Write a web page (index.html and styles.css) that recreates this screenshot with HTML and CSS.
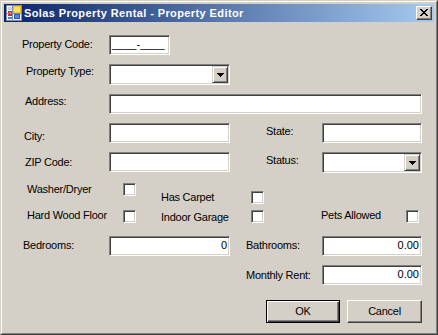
FILE: index.html
```html
<!DOCTYPE html>
<html>
<head>
<meta charset="utf-8">
<title>Solas Property Rental - Property Editor</title>
<link rel="stylesheet" href="styles.css">
</head>
<body>
<div class="window">
  <div class="frame">
    <div class="titlebar">
      <svg class="app-icon" width="16" height="16" viewBox="0 0 16 16" shape-rendering="crispEdges">
        <rect x="0" y="0" width="16" height="16" fill="#7f8fa8"/>
        <rect x="1" y="1" width="14" height="14" fill="#ffffff"/>
        <rect x="2" y="2" width="4" height="3" fill="#c8d0e0"/>
        <rect x="2" y="6" width="4" height="5" fill="#d82818"/>
        <rect x="3" y="7" width="2" height="2" fill="#f08070"/>
        <rect x="2" y="12" width="4" height="2" fill="#5080d8"/>
        <rect x="7" y="1" width="8" height="7" fill="#f0c020"/>
        <rect x="8" y="2" width="6" height="5" fill="#f8e060"/>
        <rect x="8" y="9" width="6" height="5" fill="#2858c8"/>
        <rect x="9" y="10" width="4" height="3" fill="#5888e8"/>
        <rect x="6" y="1" width="1" height="14" fill="#7f8fa8"/>
        <rect x="1" y="8" width="14" height="1" fill="#7f8fa8"/>
      </svg>
      <span class="title">Solas Property Rental - Property Editor</span>
      <div class="cap-btn">
        <svg width="8" height="7" viewBox="0 0 8 7" shape-rendering="crispEdges">
          <path d="M0 0h2v1H0zM6 0h2v1H6zM1 1h2v1H1zM5 1h2v1H5zM2 2h4v1H2zM3 3h2v1H3zM2 4h4v1H2zM1 5h2v1H1zM5 5h2v1H5zM0 6h2v1H0zM6 6h2v1H6z" fill="#000"/>
        </svg>
      </div>
    </div>

    <div class="client">
      <div class="row first">
        <label class="lbl col-a l-code">Property Code:</label>
        <div class="tb mask w-code">____-____</div>
      </div>
      <div class="row">
        <label class="lbl col-a l-type">Property Type:</label>
        <div class="combo w-left"><span class="drop"><svg width="7" height="4" viewBox="0 0 7 4" shape-rendering="crispEdges"><path d="M0 0h7v1H0zM1 1h5v1H1zM2 2h3v1H2zM3 3h1v1H3z" fill="#000"/></svg></span></div>
      </div>
      <div class="row">
        <label class="lbl col-a l-address">Address:</label>
        <div class="tb w-full"></div>
      </div>
      <div class="row">
        <label class="lbl col-a l-city">City:</label>
        <div class="tb w-left"></div>
        <label class="lbl col-b l-state">State:</label>
        <div class="tb w-right"></div>
      </div>
      <div class="row">
        <label class="lbl col-a l-zip">ZIP Code:</label>
        <div class="tb w-left"></div>
        <label class="lbl col-b l-status">Status:</label>
        <div class="combo w-right"><span class="drop"><svg width="7" height="4" viewBox="0 0 7 4" shape-rendering="crispEdges"><path d="M0 0h7v1H0zM1 1h5v1H1zM2 2h3v1H2zM3 3h1v1H3z" fill="#000"/></svg></span></div>
      </div>

      <div class="checks">
        <div class="chk-col col-1">
          <div class="chk">
            <span class="lbl cl-1">Washer/Dryer</span>
            <span class="cb"></span>
          </div>
          <div class="chk second">
            <span class="lbl cl-1 up">Hard Wood Floor</span>
            <span class="cb"></span>
          </div>
        </div>
        <div class="chk-col col-2">
          <div class="chk">
            <span class="lbl cl-2">Has Carpet</span>
            <span class="cb"></span>
          </div>
          <div class="chk near">
            <span class="lbl cl-2 down">Indoor Garage</span>
            <span class="cb"></span>
          </div>
        </div>
        <div class="chk-col col-3">
          <div class="chk">
            <span class="lbl cl-3 up">Pets Allowed</span>
            <span class="cb"></span>
          </div>
        </div>
      </div>

      <div class="row after-checks">
        <label class="lbl col-a l-bed">Bedrooms:</label>
        <div class="tb num w-left">0</div>
        <label class="lbl col-b l-bath">Bathrooms:</label>
        <div class="tb num w-right">0.00</div>
      </div>
      <div class="row">
        <label class="lbl col-b skip l-rent">Monthly Rent:</label>
        <div class="tb num w-right">0.00</div>
      </div>

      <div class="buttons">
        <button class="btn default">OK</button>
        <button class="btn cancel">Cancel</button>
      </div>
    </div>
  </div>
</div>
</body>
</html>
```

FILE: styles.css
```css
* { box-sizing: border-box; }

html, body {
  margin: 0;
  padding: 0;
  background: #d4d0c8;
}

body {
  font-family: "Liberation Sans", Arial, sans-serif;
  font-size: 11px;
  line-height: 13px;
  color: #000;
}

.window {
  width: 438px;
  height: 335px;
  border: 1px solid;
  border-color: #d4d0c8 #404040 #404040 #d4d0c8;
  background: #d4d0c8;
}

.frame {
  height: 100%;
  border: 1px solid;
  border-color: #fff #808080 #808080 #fff;
  padding: 2px;
  display: flex;
  flex-direction: column;
}

.titlebar {
  height: 18px;
  flex: none;
  display: flex;
  align-items: center;
  padding: 0 2px;
  background: linear-gradient(to right, #0a246a, #a6caf0);
}

.app-icon {
  flex: none;
  display: block;
}

.title {
  flex: 1;
  margin-left: 2px;
  color: #fff;
  font-weight: bold;
  letter-spacing: 0.4px;
  white-space: nowrap;
}

.cap-btn {
  flex: none;
  width: 16px;
  height: 14px;
  background: #d4d0c8;
  border: 1px solid;
  border-color: #fff #404040 #404040 #fff;
  box-shadow: inset -1px -1px #808080;
  display: flex;
  justify-content: center;
  align-items: center;
  padding: 0 0 1px 0;
}

.cap-btn svg { display: block; }

.client {
  flex: 1;
  display: flex;
  flex-direction: column;
}

/* form rows */
.row {
  display: flex;
  align-items: flex-start;
  margin-top: 9px;
}

.row.first { margin-top: 13px; }
.row.after-checks { margin-top: 12px; }

.lbl {
  display: block;
  letter-spacing: -0.25px;
  white-space: nowrap;
  flex: none;
}

.col-a { width: 105px; }
.col-b { width: 92px; padding-left: 36px; }
.col-b.skip { margin-left: 226px; }

.l-code { padding-left: 18px; margin-top: 3px; }
.l-type { padding-left: 22px; margin-top: 1px; }
.l-address { padding-left: 21px; margin-top: 1px; }
.l-city { padding-left: 20px; margin-top: 7px; }
.l-state { margin-top: 2px; }
.l-zip { padding-left: 21px; margin-top: 4px; }
.l-status { margin-top: 2px; }
.l-bed { padding-left: 19px; margin-top: 3px; }
.l-bath { padding-left: 16px; margin-top: 3px; }
.l-rent { padding-left: 16px; margin-top: 4px; }

/* sunken text boxes */
.tb {
  flex: none;
  height: 20px;
  background: #fff;
  border: 1px solid;
  border-color: #808080 #fff #fff #808080;
  box-shadow: inset 1px 1px #404040, inset -1px -1px #d4d0c8;
  padding: 2px 2px 0 2px;
  white-space: nowrap;
  overflow: hidden;
}

.tb.num { text-align: right; }
.tb.mask { padding-left: 2px; }

.w-code { width: 61px; }
.w-left { width: 121px; }
.w-right { width: 100px; }
.w-full { width: 313px; }

/* combo boxes */
.combo {
  flex: none;
  height: 21px;
  background: #fff;
  border: 1px solid;
  border-color: #808080 #fff #fff #808080;
  box-shadow: inset 1px 1px #404040, inset -1px -1px #d4d0c8;
  padding: 1px;
  display: flex;
  justify-content: flex-end;
}

.drop {
  width: 16px;
  height: 17px;
  background: #d4d0c8;
  border: 1px solid;
  border-color: #d4d0c8 #404040 #404040 #d4d0c8;
  box-shadow: inset 1px 1px #fff, inset -1px -1px #808080;
  display: flex;
  justify-content: center;
  align-items: center;
}

.drop svg { display: block; }

/* checkboxes */
.checks {
  display: flex;
  align-items: flex-start;
  margin-top: 10px;
}

.chk-col { display: flex; flex-direction: column; flex: none; }
.col-1 { margin-left: 23px; }
.col-2 { margin-left: 25px; padding-top: 8px; }
.col-3 { margin-left: 57px; padding-top: 27px; }

.chk { display: flex; align-items: flex-start; }
.chk.second { margin-top: 14px; }
.chk.near { margin-top: 6px; }

.cl-1 { width: 96px; }
.cl-2 { width: 90px; }
.cl-3 { width: 85px; }
.lbl.up { margin-top: -1px; }
.lbl.down { margin-top: 1px; }

.cb {
  flex: none;
  width: 13px;
  height: 13px;
  background: #fff;
  border: 1px solid;
  border-color: #808080 #fff #fff #808080;
  box-shadow: inset 1px 1px #404040, inset -1px -1px #d4d0c8;
}

/* buttons */
.buttons {
  display: flex;
  margin-top: 15px;
  margin-left: 262px;
}

.btn {
  height: 23px;
  padding: 0;
  margin: 0;
  font: inherit;
  letter-spacing: -0.25px;
  color: #000;
  background: #d4d0c8;
  border: 1px solid;
  border-color: #fff #404040 #404040 #fff;
  box-shadow: inset -1px -1px #808080;
  text-align: center;
}

.btn.default {
  width: 74px;
  border-color: #000;
  box-shadow: inset 1px 1px #fff, inset -1px -1px #404040, inset -2px -2px #808080;
}

.btn.cancel {
  width: 75px;
  margin-left: 7px;
}
```
